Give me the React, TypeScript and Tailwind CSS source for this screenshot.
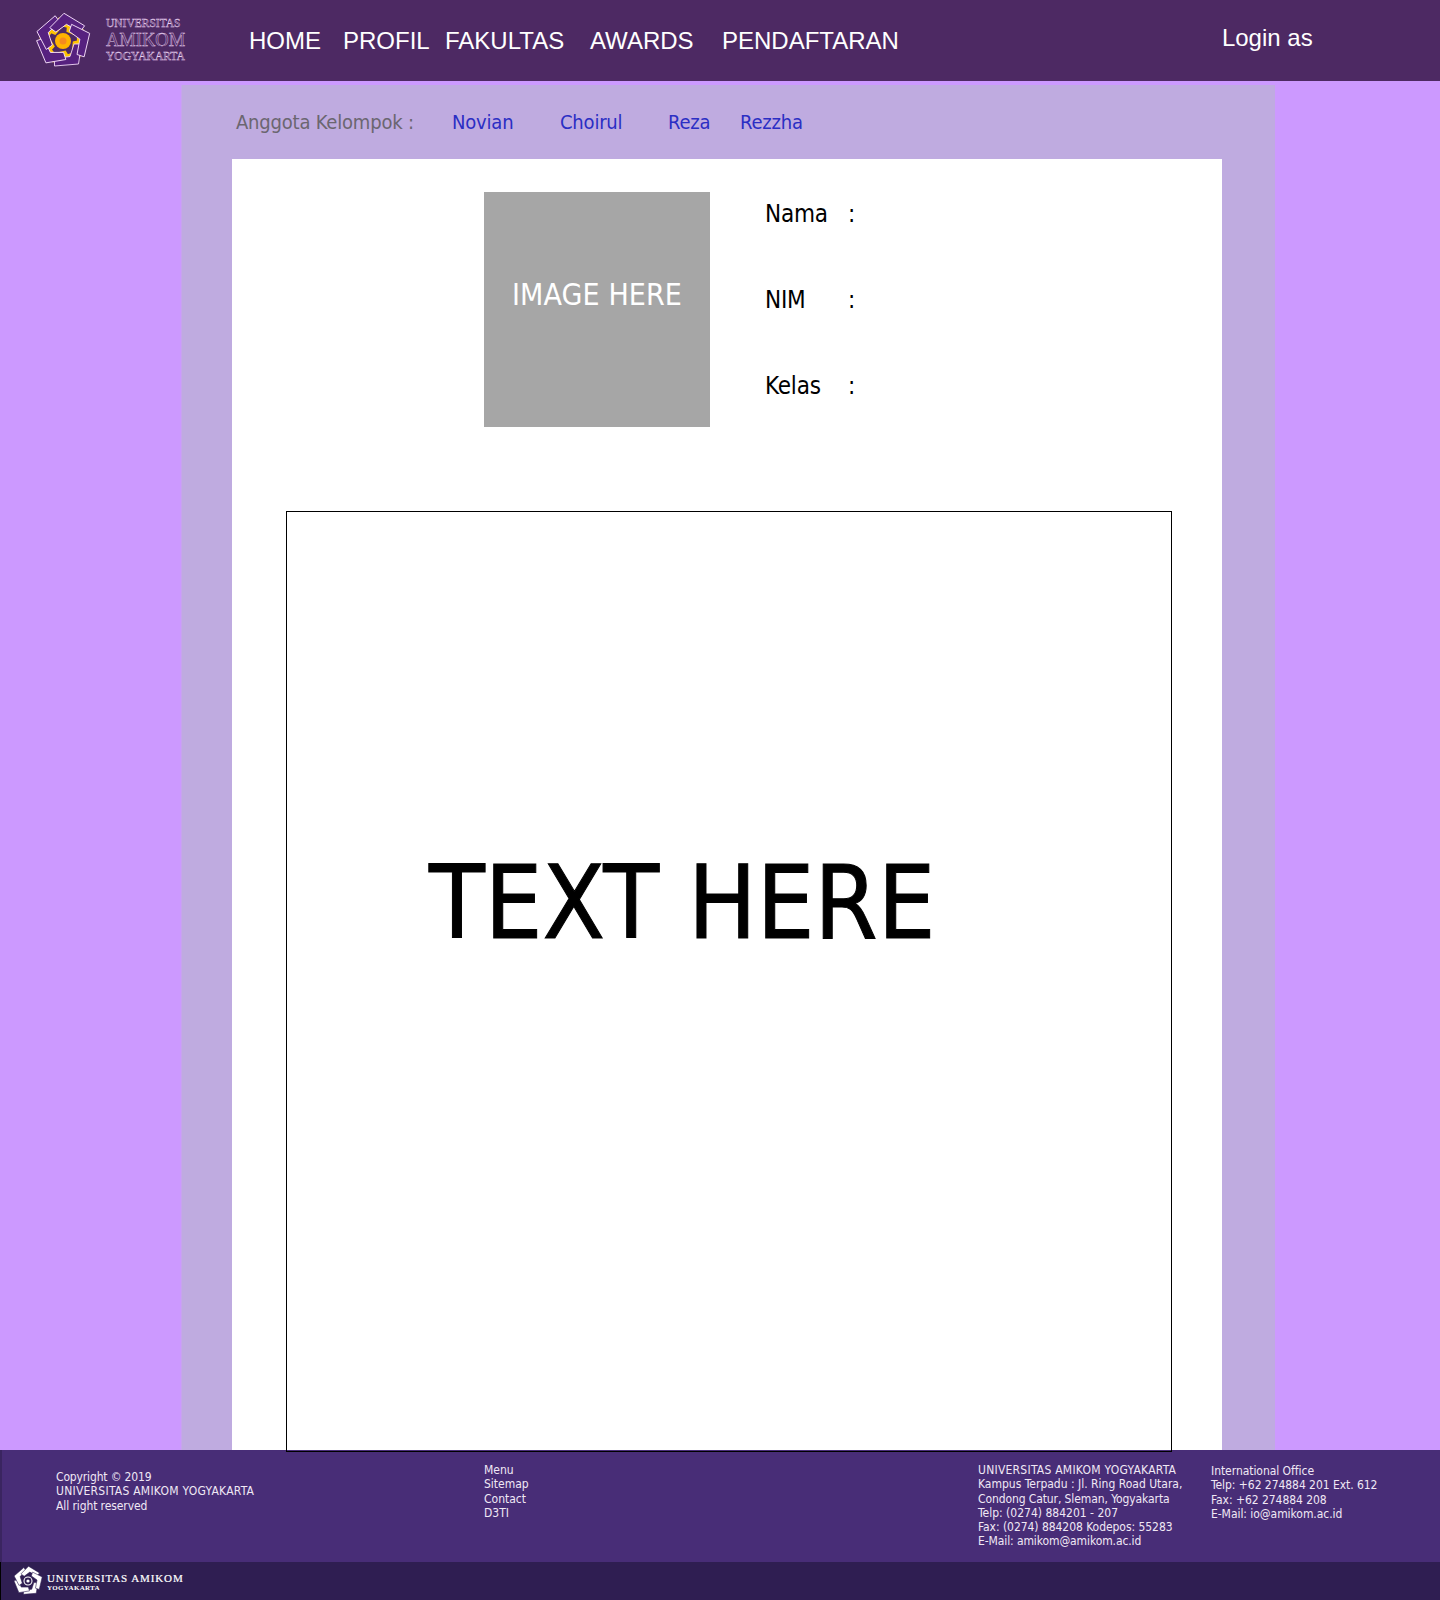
const tahoma = "font-['DejaVu_Sans_Condensed','DejaVu_Sans',sans-serif] font-stretch-condensed";

const hook = "M-8.5 25 L15.5 23 L18.5 3 L11 3 L7 15.5 L-8.5 17.5 Z";

function Logo({ mono }: { mono?: boolean }) {
  const angles = [0, 72, 144, 216, 288];
  return (
    <svg viewBox="-30 -30 60 60" className="w-full h-full">
      {!mono &&
        angles.map((a) => (
          <path key={a} d={hook} fill="#ffc400" transform={`rotate(${a - 13}) scale(0.86)`} />
        ))}
      {angles.map((a) => (
        <path
          key={a}
          d={hook}
          transform={`rotate(${a})`}
          fill={mono ? "#ffffff" : "#56217f"}
          stroke={mono ? "#2f1e52" : "#efd6f5"}
          strokeWidth={mono ? 1 : 0.9}
        />
      ))}
      {mono ? (
        <>
          <circle r="7.5" fill="#2f1e52" stroke="#fff" strokeWidth="2" />
          <circle r="3" fill="#fff" />
        </>
      ) : (
        <>
          <circle r="8" fill="#ffb300" />
          <circle r="3.5" fill="#f58a1f" />
        </>
      )}
    </svg>
  );
}

export default function App() {
  return (
    <div className="w-[1440px] h-[1600px] flex flex-col bg-[#cc99ff] overflow-hidden">
      <header className="h-[81px] shrink-0 bg-[#4d2963] flex items-center font-['Liberation_Sans',sans-serif] text-white">
        <div className="w-[60px] h-[60px] ml-[33px] shrink-0">
          <Logo />
        </div>
        <div className="ml-[13px] w-[82px] -mt-[2px] font-['Liberation_Serif',serif] text-transparent [-webkit-text-stroke:0.4px_#e8d0f0] flex flex-col items-start">
          <span className="text-[11.5px] leading-[14px]">UNIVERSITAS</span>
          <span className="text-[18.5px] leading-[20px]">AMIKOM</span>
          <span className="text-[11.6px] leading-[14px]">YOGYAKARTA</span>
        </div>
        <nav className="ml-[61px] flex text-[24px] leading-[28px]">
          <span className="w-[94px]">HOME</span>
          <span className="w-[102px]">PROFIL</span>
          <span className="w-[145px]">FAKULTAS</span>
          <span className="w-[132px]">AWARDS</span>
          <span>PENDAFTARAN</span>
        </nav>
        <span className="ml-[323px] -mt-[6px] text-[24px] leading-[28px]">Login as</span>
      </header>

      <main className="flex-1 min-h-0 w-[1094px] ml-[181px] mt-[4px] bg-[#bfabe0] border-l border-[#c7a4ee] flex flex-col">
        <div className={`h-[74px] shrink-0 flex items-center pl-[54px] text-[20px] tracking-[-0.2px] text-[#2b2ec4] ${tahoma}`}>
          <span className="w-[216px] text-[#6b6670]">Anggota Kelompok :</span>
          <span className="w-[108px]">Novian</span>
          <span className="w-[108px]">Choirul</span>
          <span className="w-[72px]">Reza</span>
          <span>Rezzha</span>
        </div>
        <div className={`flex-1 min-h-0 ml-[50px] w-[990px] bg-white flex flex-col ${tahoma}`}>
          <div className="flex pt-[33px] pl-[252px]">
            <div className="w-[226px] h-[235px] bg-[#a6a6a6] text-white text-[30px] tracking-[0.1px] flex items-start justify-center pt-[83px] leading-[40px]">
              IMAGE HERE
            </div>
            <div className="ml-[55px] text-[24px] tracking-[-0.2px] text-black leading-[32px] flex flex-col gap-[54px] pt-[6px]">
              <div className="flex"><span className="w-[83px]">Nama</span><span>:</span></div>
              <div className="flex"><span className="w-[83px]">NIM</span><span>:</span></div>
              <div className="flex"><span className="w-[83px]">Kelas</span><span>:</span></div>
            </div>
          </div>
          <div className="relative z-10 mt-[84px] ml-[54px] w-[886px] h-[941px] shrink-0 border border-black flex items-start pl-[142px] pt-[331px]">
            <span className="text-[101.5px] leading-[120px] text-black [-webkit-text-stroke:1px_#000]">TEXT HERE</span>
          </div>
        </div>
      </main>

      <footer className={`h-[112px] shrink-0 bg-[#482d77] border-l-2 border-[#3a2560] text-[#f0e8f5] text-[12px] leading-[14.3px] flex ${tahoma}`}>
        <div className="ml-[54px] mt-[20px] w-[428px]">
          <p className="tracking-[-0.15px]">Copyright © 2019</p>
          <p className="tracking-[0.25px]">UNIVERSITAS AMIKOM YOGYAKARTA</p>
          <p className="tracking-[-0.1px]">All right reserved</p>
        </div>
        <div className="mt-[13px] w-[494px]">
          <p>Menu</p><p>Sitemap</p><p>Contact</p><p>D3TI</p>
        </div>
        <div className="mt-[13px] w-[233px]">
          <p className="tracking-[0.25px]">UNIVERSITAS AMIKOM YOGYAKARTA</p>
          <p>Kampus Terpadu : Jl. Ring Road Utara,</p>
          <p className="tracking-[-0.1px]">Condong Catur, Sleman, Yogyakarta</p>
          <p>Telp: (0274) 884201 - 207</p>
          <p className="tracking-[-0.05px]">Fax: (0274) 884208 Kodepos: 55283</p>
          <p className="tracking-[-0.1px]">E-Mail: amikom@amikom.ac.id</p>
        </div>
        <div className="mt-[14px] tracking-[-0.05px]">
          <p>International Office</p>
          <p>Telp: +62 274884 201 Ext. 612</p>
          <p>Fax: +62 274884 208</p>
          <p>E-Mail: io@amikom.ac.id</p>
        </div>
      </footer>
      <div className="h-[38px] shrink-0 bg-[#2f1e52] border-l border-black flex items-center pl-[11px] text-white font-['Liberation_Serif',serif]">
        <div className="w-[32px] h-[32px] shrink-0"><Logo mono /></div>
        <div className="ml-[3px] mt-[2px] flex flex-col font-bold">
          <span className="text-[11px] leading-[12px] tracking-[0.9px] font-normal [-webkit-text-stroke:0.2px_#fff]">UNIVERSITAS AMIKOM</span>
          <span className="text-[7px] leading-[8px] tracking-[0.3px]">YOGYAKARTA</span>
        </div>
      </div>
    </div>
  );
}
